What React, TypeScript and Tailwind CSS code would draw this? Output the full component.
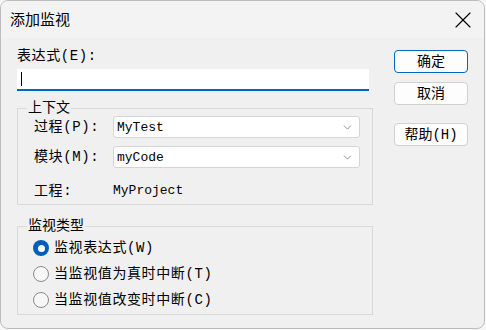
import { X, ChevronDown } from 'lucide-react';

const cjk = { fontFamily: '"Liberation Mono", "Noto Sans CJK SC", monospace' };
const mono = { fontFamily: '"Liberation Mono", "DejaVu Sans Mono", monospace' };

function Select({ value }: { value: string }) {
  return (
    <div className="flex h-[22px] w-[247px] items-center justify-between rounded-[3px] border border-[#d5d5d5] bg-white pl-[3px] pr-[5px]">
      <span className="text-[13px] leading-none text-black" style={mono}>
        {value}
      </span>
      <ChevronDown size={13} strokeWidth={1.2} className="text-[#5f5f5f]" />
    </div>
  );
}

function Radio({ checked, label }: { checked?: boolean; label: string }) {
  return (
    <div className="flex h-[26px] items-center gap-[5px]">
      {checked ? (
        <div className="flex h-[16px] w-[16px] items-center justify-center rounded-full bg-[#005fb8]">
          <div className="h-[7px] w-[7px] rounded-full bg-white" />
        </div>
      ) : (
        <div className="h-[16px] w-[16px] rounded-full border border-[#8a8a8a] bg-[#f7f7f7]" />
      )}
      <span className="text-[14px] leading-none tracking-[0.6px] text-black">{label}</span>
    </div>
  );
}

function Button({ label, primary }: { label: string; primary?: boolean }) {
  return (
    <button
      className={
        primary
          ? 'flex h-[23px] w-[74px] items-center justify-center rounded-[4px] border border-[#0067c0] bg-[#fdfdfd] text-[14px] leading-none text-black'
          : 'flex h-[23px] w-[74px] items-center justify-center rounded-[4px] border border-[#d0d0d0] bg-[#fdfdfd] text-[14px] leading-none text-black'
      }
    >
      {label}
    </button>
  );
}

export default function App() {
  return (
    <div className="h-[330px] w-[486px] bg-[#f6f6f6]" style={cjk}>
      <div className="flex h-[329px] w-[485px] flex-col overflow-hidden rounded-[8px] border border-[#bdbdbd] bg-[#f0f0f0]">
        {/* title bar */}
        <div className="flex h-[37px] items-center justify-between bg-[#f3f3f3] pl-[9px] pr-[7px]">
          <span
            className="text-[15px] text-black"
            style={{ fontFamily: '"Noto Sans CJK SC", sans-serif' }}
          >
            添加监视
          </span>
          <X size={28} strokeWidth={1} className="text-black" />
        </div>

        <div className="flex flex-row pl-[16px]">
          <div className="flex w-[356px] flex-col">
            <div className="mt-[8px] flex h-[20px] items-center text-[14px] tracking-[0.6px] text-black">
              表达式(E):
            </div>
            <div className="mt-[3px] flex h-[22px] w-[352px] items-center border-b-2 border-[#0067c0] bg-white pl-[4px]">
              <div className="h-[14px] w-[1px] bg-black" />
            </div>

            <fieldset className="mt-[9px] border border-[#d9d9d9] pb-[2px] pr-[11px]">
              <legend className="ml-[9px] px-[1px] text-[14px] leading-[16px] text-black">上下文</legend>
              <div className="flex flex-col pl-[16px]">
                <div className="flex items-center">
                  <span className="w-[79px] text-[14px] tracking-[0.6px] text-black">过程(P):</span>
                  <Select value="MyTest" />
                </div>
                <div className="mt-[8px] flex items-center">
                  <span className="w-[79px] text-[14px] tracking-[0.6px] text-black">模块(M):</span>
                  <Select value="myCode" />
                </div>
                <div className="mt-[12px] flex h-[22px] items-center">
                  <span className="w-[79px] text-[14px] tracking-[0.6px] text-black">工程:</span>
                  <span className="text-[13px] text-black" style={mono}>
                    MyProject
                  </span>
                </div>
              </div>
            </fieldset>

            <fieldset className="mt-[13px] border border-[#d9d9d9] pb-[1px]">
              <legend className="ml-[9px] px-[1px] text-[14px] leading-[16px] text-black">监视类型</legend>
              <div className="mt-[1px] pl-[15px]">
                <Radio checked label="监视表达式(W)" />
                <Radio label="当监视值为真时中断(T)" />
                <Radio label="当监视值改变时中断(C)" />
              </div>
            </fieldset>
          </div>

          <div className="ml-[21px] mt-[12px] flex flex-col">
            <Button primary label="确定" />
            <div className="mt-[9px]">
              <Button label="取消" />
            </div>
            <div className="mt-[18px]">
              <Button label="帮助(H)" />
            </div>
          </div>
        </div>
      </div>
    </div>
  );
}
